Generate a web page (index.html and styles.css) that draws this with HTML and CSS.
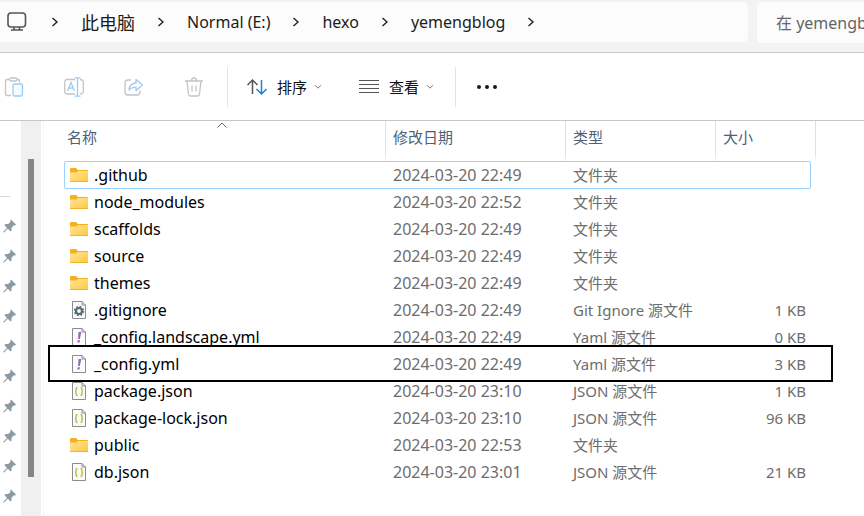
FILE: index.html
```html
<!DOCTYPE html>
<html lang="zh-CN">

<head>
    <meta charset="UTF-8">
    <meta name="viewport" content="width=device-width, initial-scale=1.0">
    <title>yemengblog</title>
    <link rel="stylesheet" href="styles.css">
</head>

<body>
    <!-- icons used more than once -->
    <svg class="sprite" aria-hidden="true">
        <linearGradient id="folderFill" x1="0" y1="0" x2="1" y2="1">
            <stop offset="0" stop-color="#ffe69c" />
            <stop offset="1" stop-color="#ffc83d" />
        </linearGradient>
        <symbol id="chevron" viewBox="0 0 8 10">
            <path d="M1.5 1 6 5 1.5 9" fill="none" stroke="#222" stroke-width="1.4" />
        </symbol>
        <symbol id="down" viewBox="0 0 8 6">
            <path d="M1 1.2 4 4.2 7 1.2" fill="none" stroke="#777" />
        </symbol>
        <symbol id="folder" viewBox="0 0 18 18">
            <path d="M0 3q0-1 1-1h5l2 2h9q1 0 1 1v3H0z" fill="#f5b01e" />
            <path d="M0 6.5h6.5L8 5h10v10q0 1-1 1H1q-1 0-1-1z" fill="url(#folderFill)" />
            <path d="M0 15.5h18" stroke="#eeb32f" />
        </symbol>
        <symbol id="sheet" viewBox="0 0 14 18">
            <path d="M.5.5h9.5l3.5 3.5v13.5H.5z" fill="#fbfbfb" stroke="#8c8c8c" />
            <path d="M10 .5V4h3.5" fill="none" stroke="#8c8c8c" />
        </symbol>
        <symbol id="gear" viewBox="0 0 14 18">
            <use href="#sheet" />
            <circle cx="7" cy="10" r="3" fill="none" stroke="#566b75" stroke-width="2.2" />
            <circle cx="7" cy="10" r="4.5" fill="none" stroke="#566b75" stroke-width="1.4" stroke-dasharray="1.77 1.77" />
        </symbol>
        <symbol id="yaml" viewBox="0 0 14 18">
            <use href="#sheet" />
            <path d="M6.5 4h2.8L7.8 11H6.100zM5.800 12.200h2.200l-.5 2.300H5.300z" fill="#9a63b5" />
        </symbol>
        <symbol id="json" viewBox="0 0 14 18">
            <use href="#sheet" />
            <path d="M5.5 5.5q-1.500 0-1.500 1.500v1.500q0 1-1 1 1 0 1 1V12q0 1.500 1.500 1.500M8.500 5.500q1.500 0 1.500 1.500v1.500q0 1 1 1-1 0-1 1V12q0 1.500-1.500 1.500" fill="none" stroke="#b9bd3c" stroke-width="1.400" />
        </symbol>
        <symbol id="pin" viewBox="0 0 14 14">
            <path d="M8 .5 13 5.5 12 6.500 10.500 6.500 8.500 9 8.500 11.500 7.500 12.500 4.800 9.800 1 13.500 0 13 4 9 1.500 6.300 2.500 5 5.200 5 7.500 3 7.300 1.300z" fill="#8c9aa3" />
        </symbol>
    </svg>

    <header class="address">
        <nav class="path">
            <svg class="monitor" viewBox="0 0 20 20" fill="none" stroke="#555" stroke-width="1.6">
                <rect x="1" y="1" width="17.5" height="14" rx="3" />
                <path d="M7 15v3M12.5 15v3M4 18h12" />
            </svg>
            <svg class="chevron"><use href="#chevron" /></svg>
            <a class="crumb computer" href="#">此电脑</a>
            <svg class="chevron"><use href="#chevron" /></svg>
            <a class="crumb" href="#">Normal (E:)</a>
            <svg class="chevron"><use href="#chevron" /></svg>
            <a class="crumb" href="#">hexo</a>
            <svg class="chevron"><use href="#chevron" /></svg>
            <a class="crumb" href="#">yemengblog</a>
            <svg class="chevron"><use href="#chevron" /></svg>
        </nav>
        <input class="search" type="text" aria-label="搜索" placeholder="在 yemengblog 中搜索">
    </header>

    <div class="toolbar">
        <div class="edit">
            <button type="button" aria-label="粘贴" disabled>
                <svg viewBox="0 0 20 20" fill="none" stroke="#c4c4c4" stroke-width="1.3">
                    <path d="M7 18.5H3q-1.500 0-1.500-1.500V4Q1.500 2.500 3 2.500h2M13 2.500h1q1.500 0 1.500 1.500v1.500" />
                    <rect x="5.5" y="1" width="7.5" height="3" rx="1.5" />
                    <rect x="9" y="7" width="9.5" height="12" rx="1.5" stroke="#9ccbf2" fill="#f5faff" />
                </svg>
            </button>
            <button type="button" aria-label="重命名" disabled>
                <svg viewBox="0 0 20 20" fill="none" stroke="#c4c4c4" stroke-width="1.3">
                    <path d="M11 17H3.500Q.7 17 .7 14V5.500Q.7 2.500 3.500 2.500H11M16 2.500q3.300 0 3.300 3V14q0 3-3.300 3" />
                    <path d="M3.500 14 7 5.500 10.500 14M4.700 11h4.600M13.500 1v18M10.500.8h6M10.500 19.200h6" stroke="#9ccbf2" />
                </svg>
            </button>
            <button type="button" aria-label="共享" disabled>
                <svg viewBox="0 0 20 20" fill="none" stroke="#c4c4c4" stroke-width="1.3" stroke-linejoin="round">
                    <path d="M7 3H4Q1 3 1 6v9q0 3 3 3h9q3 0 3-3v-1.500" />
                    <path d="M12 2.500 18.500 8 12 13.500v-3q-4.500-.5-7 2.500.5-6.500 7-7z" stroke="#9ccbf2" />
                </svg>
            </button>
            <button type="button" aria-label="删除" disabled>
                <svg viewBox="0 0 20 20" fill="none" stroke="#c4c4c4" stroke-width="1.3">
                    <path d="M1 4h18M7.500 4Q7.500 1 10 1t2.500 3M3 4l1.500 13q.2 2 2 2h7q1.800 0 2-2L17 4M8 8.500v6M12 8.500v6" />
                </svg>
            </button>
        </div>
        <div class="views">
            <button type="button">
                <svg class="icon" viewBox="0 0 20 20" fill="none" stroke-width="1.5">
                    <path d="M5.500 17V3M.5 8l5-5 5 5" stroke="#555" />
                    <path d="M14.500 3v14M9.500 12l5 5 5-5" stroke="#1b7fd4" />
                </svg>
                排序
                <svg class="down"><use href="#down" /></svg>
            </button>
            <button type="button">
                <svg class="icon" viewBox="0 0 20 20" stroke="#555">
                    <path d="M0 3.500h20M0 7.500h20M0 11.500h20M0 15.500h20" />
                </svg>
                查看
                <svg class="down"><use href="#down" /></svg>
            </button>
        </div>
        <button type="button" class="more" aria-label="更多">
            <svg viewBox="0 0 20 20" fill="#1b1b1b">
                <circle cx="2" cy="10" r="2" /><circle cx="10" cy="10" r="2" /><circle cx="18" cy="10" r="2" />
            </svg>
        </button>
    </div>

    <main class="content">
        <aside class="sidebar">
            <svg><use href="#pin" /></svg>
            <svg><use href="#pin" /></svg>
            <svg><use href="#pin" /></svg>
            <svg><use href="#pin" /></svg>
            <svg><use href="#pin" /></svg>
            <svg><use href="#pin" /></svg>
            <svg><use href="#pin" /></svg>
            <svg><use href="#pin" /></svg>
            <svg><use href="#pin" /></svg>
            <svg><use href="#pin" /></svg>
        </aside>
        <div class="scrollbar"><div class="thumb"></div></div>
        <div class="files">
            <table>
                <thead>
                    <tr>
                        <th class="name">名称
                            <svg class="sorted" viewBox="0 0 10 6"><path d="M.5 5.5 5 1l4.500 4.500" fill="none" stroke="#666" /></svg>
                        </th>
                        <th class="date">修改日期</th>
                        <th class="type">类型</th>
                        <th class="size">大小</th>
                    </tr>
                </thead>
                <tbody>
                    <tr class="selected">
                        <td class="name"><svg class="folder"><use href="#folder" /></svg>.github</td>
                        <td>2024-03-20 22:49</td>
                        <td class="type">文件夹</td>
                        <td></td>
                    </tr>
                    <tr>
                        <td class="name"><svg class="folder"><use href="#folder" /></svg>node_modules</td>
                        <td>2024-03-20 22:52</td>
                        <td class="type">文件夹</td>
                        <td></td>
                    </tr>
                    <tr>
                        <td class="name"><svg class="folder"><use href="#folder" /></svg>scaffolds</td>
                        <td>2024-03-20 22:49</td>
                        <td class="type">文件夹</td>
                        <td></td>
                    </tr>
                    <tr>
                        <td class="name"><svg class="folder"><use href="#folder" /></svg>source</td>
                        <td>2024-03-20 22:49</td>
                        <td class="type">文件夹</td>
                        <td></td>
                    </tr>
                    <tr>
                        <td class="name"><svg class="folder"><use href="#folder" /></svg>themes</td>
                        <td>2024-03-20 22:49</td>
                        <td class="type">文件夹</td>
                        <td></td>
                    </tr>
                    <tr>
                        <td class="name"><svg class="file"><use href="#gear" /></svg>.gitignore</td>
                        <td>2024-03-20 22:49</td>
                        <td class="type">Git Ignore 源文件</td>
                        <td class="size">1 KB</td>
                    </tr>
                    <tr>
                        <td class="name"><svg class="file"><use href="#yaml" /></svg>_config.landscape.yml</td>
                        <td>2024-03-20 22:49</td>
                        <td class="type">Yaml 源文件</td>
                        <td class="size">0 KB</td>
                    </tr>
                    <tr class="marked">
                        <td class="name"><svg class="file"><use href="#yaml" /></svg>_config.yml</td>
                        <td>2024-03-20 22:49</td>
                        <td class="type">Yaml 源文件</td>
                        <td class="size">3 KB</td>
                    </tr>
                    <tr>
                        <td class="name"><svg class="file"><use href="#json" /></svg>package.json</td>
                        <td>2024-03-20 23:10</td>
                        <td class="type">JSON 源文件</td>
                        <td class="size">1 KB</td>
                    </tr>
                    <tr>
                        <td class="name"><svg class="file"><use href="#json" /></svg>package-lock.json</td>
                        <td>2024-03-20 23:10</td>
                        <td class="type">JSON 源文件</td>
                        <td class="size">96 KB</td>
                    </tr>
                    <tr>
                        <td class="name"><svg class="folder"><use href="#folder" /></svg>public</td>
                        <td>2024-03-20 22:53</td>
                        <td class="type">文件夹</td>
                        <td></td>
                    </tr>
                    <tr>
                        <td class="name"><svg class="file"><use href="#json" /></svg>db.json</td>
                        <td>2024-03-20 23:01</td>
                        <td class="type">JSON 源文件</td>
                        <td class="size">21 KB</td>
                    </tr>
                </tbody>
            </table>
        </div>
    </main>
</body>

</html>
```

FILE: styles.css
```css
* {
    box-sizing: border-box;
}

body {
    margin: 0;
    min-height: 100vh;
    display: flex;
    flex-direction: column;
    overflow: hidden;
    background: #fff;
    color: #111;
    font-family: "Noto Sans", "Noto Sans CJK SC", sans-serif;
    font-size: 15px;
}

svg {
    display: block;
    flex: none;
}

button {
    display: flex;
    align-items: center;
    padding: 0;
    border: none;
    background: none;
    color: inherit;
    font: inherit;
}

.sprite {
    position: absolute;
    width: 0;
    height: 0;
}

/* address bar */
.address {
    display: flex;
    gap: 9px;
    height: 53px;
    padding: 2px 0 8px;
    overflow: hidden;
    background: #f3f3f4;
    border-bottom: 1px solid #c8c5ca;
}

.path {
    flex: 1;
    display: flex;
    align-items: center;
    height: 40px;
    padding-left: 7px;
    background: #fcfcfc;
    border-radius: 0 5px 5px 0;
}

.monitor {
    width: 20px;
    height: 20px;
    margin-right: 2px;
}

.chevron {
    width: 8px;
    height: 10px;
    margin: 0 22px;
}

.crumb {
    color: #1b1b1b;
    font-size: 16px;
    text-decoration: none;
    white-space: nowrap;
}

.computer {
    font-size: 18px;
}

.search {
    width: 107px;
    height: 41px;
    padding: 0 0 0 19px;
    border: none;
    border-radius: 5px 0 0 5px;
    background: #fcfcfc;
    font-family: inherit;
    font-size: 16px;
}

.search::placeholder {
    color: #666;
}

/* command bar */
.toolbar {
    display: flex;
    align-items: center;
    height: 68px;
    padding-left: 4px;
    border-bottom: 1px solid #c8c5ca;
}

.toolbar svg {
    width: 20px;
    height: 20px;
}

.edit,
.views {
    display: flex;
    align-items: center;
    height: 40px;
    border-right: 1px solid #e5e5e5;
}

.edit {
    gap: 40px;
    padding-right: 23px;
}

.views {
    gap: 37px;
    padding: 0 21px 0 19px;
}

.views .icon {
    margin-right: 10px;
}

.toolbar .down {
    width: 8px;
    height: 6px;
    margin-left: 7px;
}

.more {
    margin-left: 21px;
}

/* sidebar */
.content {
    flex: 1;
    display: flex;
}

.sidebar {
    display: flex;
    flex-direction: column;
    gap: 16px;
    width: 21px;
    padding: 98px 0 0 3px;
    background: linear-gradient(#d8d8d8, #d8d8d8) 0 75px / 10px 1px no-repeat;
}

.sidebar svg {
    width: 14px;
    height: 14px;
}

.scrollbar {
    width: 20px;
    padding: 38px 7px 0;
    background: #f0f0f0;
}

.thumb {
    height: 318px;
    background: #858585;
}

/* file list */
.files {
    flex: 1;
    margin-left: 2px;
    padding-left: 20px;
    border-left: 1px solid #f5f5f5;
}

table {
    width: 752px;
    table-layout: fixed;
    border-collapse: separate;
    border-spacing: 0;
}

th {
    position: relative;
    height: 41px;
    padding: 0 0 2px 7px;
    border-right: 1px solid #e0e0e0;
    border-bottom: 8px solid #fff;
    color: #4c607a;
    font-weight: normal;
    text-align: left;
}

th.name {
    width: 322px;
    padding-left: 3px;
}

th.date {
    width: 180px;
}

th.type {
    width: 150px;
}

th.size {
    width: 100px;
}

.sorted {
    position: absolute;
    top: 1px;
    left: 153px;
    width: 10px;
    height: 6px;
}

tbody tr {
    position: relative;
}

td {
    height: 27px;
    padding: 0 0 0 7px;
    color: #6d6d6d;
    font-size: 16px;
    line-height: 27px;
    white-space: nowrap;
}

td.name {
    display: flex;
    align-items: center;
    padding-left: 6px;
    color: #000;
}

td.type {
    font-size: 15px;
}

td.size {
    padding-right: 10px;
    font-size: 15px;
    text-align: right;
}

.folder {
    width: 18px;
    height: 18px;
    margin: 0 6px 2px 0;
}

.file {
    width: 14px;
    height: 18px;
    margin: 0 8px 2px 2px;
}

.selected::after,
.marked::after {
    content: "";
    position: absolute;
    pointer-events: none;
}

.selected::after {
    inset: -1px 5px 0 0;
    border: 1px solid #99d1ff;
    border-radius: 2px;
}

.marked::after {
    inset: -6px -17px -4px -16px;
    border: 2px solid #000;
}
```
